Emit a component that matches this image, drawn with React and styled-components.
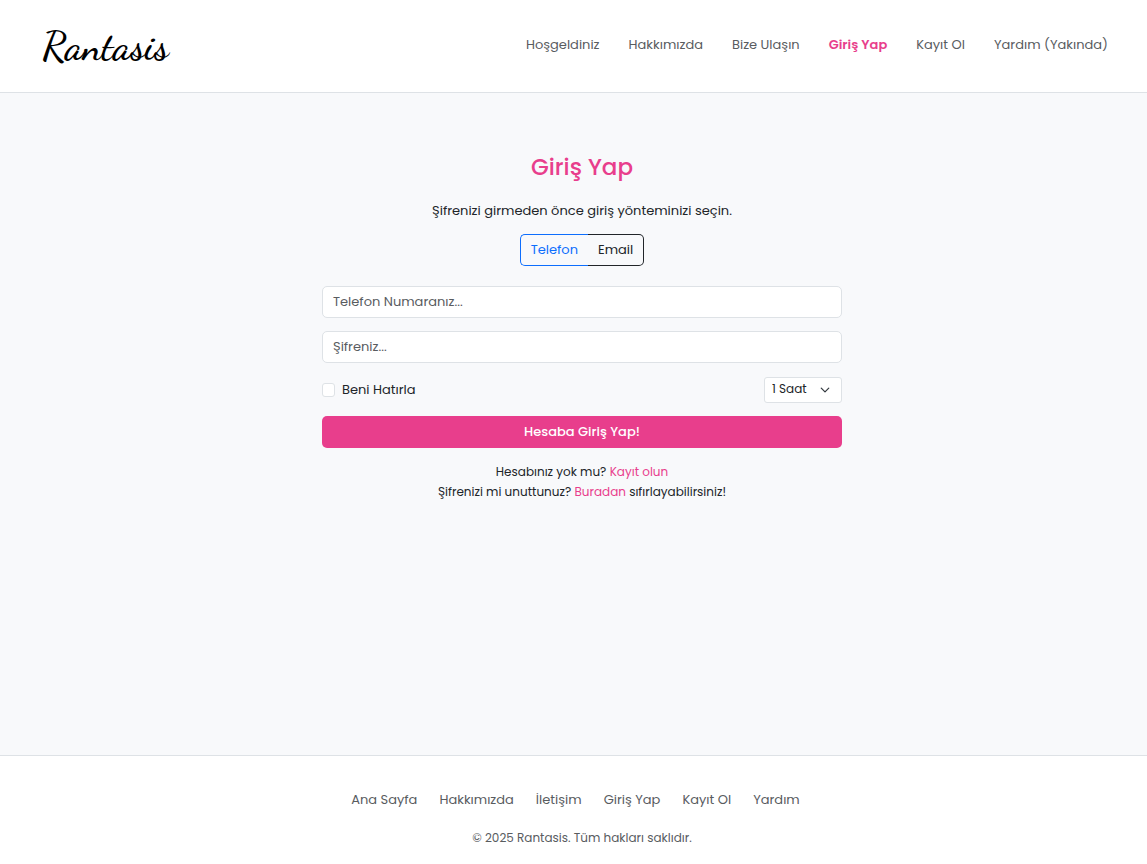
import React, { useState } from "react";
import styled, { createGlobalStyle } from "styled-components";

const GlobalStyle = createGlobalStyle`
  * {
    box-sizing: border-box;
  }
  body {
    margin: 0;
    font-family: "Poppins", "Inter", sans-serif;
    font-size: 13px;
    line-height: 20px;
    color: #212529;
    background-color: #f8f9fb;
  }
  button,
  input,
  select {
    font: inherit;
  }
`;

const Page = styled.div`
  min-height: 100vh;
  display: flex;
  flex-direction: column;
`;

const Header = styled.header`
  display: flex;
  justify-content: space-between;
  align-items: center;
  padding: 20px 39px 20px 42px;
  background-color: #ffffff;
  border-bottom: 1px solid #dee2e6;
`;

const Brand = styled.a`
  font-family: "Dancing Script", "Lato", cursive;
  font-weight: 600;
  font-size: 40px;
  line-height: 52px;
  color: #000000;
  text-decoration: none;
`;

const Nav = styled.nav`
  display: flex;
  flex-wrap: wrap;
  gap: 29px;
  padding-bottom: 2px;
`;

const NavLink = styled.a`
  font-weight: ${(props) => (props.$active ? 600 : 400)};
  color: ${(props) => (props.$active ? "#e83e8c" : "#595c5f")};
  text-decoration: none;
`;

const Main = styled.main`
  flex: 1;
  display: flex;
  flex-direction: column;
  align-items: center;
  padding: 60px 0 60px 17px;
`;

const Title = styled.h1`
  margin: 0 0 20px;
  font-weight: 500;
  font-size: 23px;
  line-height: 28px;
  color: #e83e8c;
`;

const Lead = styled.p`
  margin: 0 0 13px;
`;

const Group = styled.div`
  display: flex;
  margin-bottom: 20px;
`;

const MethodButton = styled.button`
  height: 32px;
  padding: 0 10px;
  background-color: transparent;
  border: 1px solid ${(props) => props.$tone};
  color: ${(props) => props.$tone};
  cursor: pointer;

  &:first-child {
    border-right: 0;
    border-radius: 5px 0 0 5px;
  }
  &:last-child {
    border-left: 0;
    border-radius: 0 5px 5px 0;
  }
`;

const Form = styled.form`
  width: 100%;
  max-width: 520px;
  display: flex;
  flex-direction: column;
  gap: 13px;
`;

const Field = styled.input`
  width: 100%;
  height: 32px;
  padding: 0 10px;
  color: #212529;
  background-color: #ffffff;
  border: 1px solid #dee2e6;
  border-radius: 5px;

  &::placeholder {
    color: #595c5f;
    opacity: 1;
  }
`;

const Row = styled.div`
  display: flex;
  justify-content: space-between;
  align-items: center;
  padding-top: 1px;
`;

const Remember = styled.label`
  display: flex;
  align-items: center;
  gap: 7px;
`;

const Check = styled.input`
  appearance: none;
  width: 13px;
  height: 14px;
  margin: 0;
  background-color: #ffffff;
  border: 1px solid #dee2e6;
  border-radius: 3px;

  &:checked {
    background-color: #e83e8c;
    border-color: #e83e8c;
  }
`;

const SelectBox = styled.div`
  display: grid;
  align-items: center;

  select,
  svg {
    grid-area: 1 / 1;
  }
  svg {
    justify-self: end;
    margin-right: 12px;
    pointer-events: none;
  }
`;

const Select = styled.select`
  appearance: none;
  width: 78px;
  height: 26px;
  padding: 0 24px 2px 7px;
  font-size: 12px;
  color: #212529;
  background-color: #ffffff;
  border: 1px solid #dee2e6;
  border-radius: 3px;
`;

const Submit = styled.button`
  height: 32px;
  font-weight: 500;
  color: #ffffff;
  background-color: #e83e8c;
  border: 0;
  border-radius: 5px;
  cursor: pointer;
`;

const Hints = styled.div`
  margin-top: 14px;
  text-align: center;
  font-size: 12px;

  p {
    margin: 0;
  }
  a {
    color: #e83e8c;
    text-decoration: none;
  }
`;

const Footer = styled.footer`
  display: flex;
  flex-direction: column;
  align-items: center;
  gap: 19px;
  padding: 34px 0 17px 17px;
  background-color: #ffffff;
  border-top: 1px solid #dee2e6;
  color: #595c5f;
`;

const FooterNav = styled.nav`
  display: flex;
  flex-wrap: wrap;
  gap: 22px;
  padding-right: 13px;
`;

const Copyright = styled.p`
  margin: 0;
  font-size: 12px;
  line-height: 18px;
`;

const navItems = [
  "Hoşgeldiniz",
  "Hakkımızda",
  "Bize Ulaşın",
  "Giriş Yap",
  "Kayıt Ol",
  "Yardım (Yakında)",
];

const footerItems = [
  "Ana Sayfa",
  "Hakkımızda",
  "İletişim",
  "Giriş Yap",
  "Kayıt Ol",
  "Yardım",
];

function App() {
  const [method, setMethod] = useState("phone");

  const handleSubmit = (event) => {
    event.preventDefault();
  };

  return (
    <Page lang="tr">
      <GlobalStyle />
      <Header>
        <Brand href="#">Rantasis</Brand>
        <Nav>
          {navItems.map((item) => (
            <NavLink href="#" key={item} $active={item === "Giriş Yap"}>
              {item}
            </NavLink>
          ))}
        </Nav>
      </Header>

      <Main>
        <Title>Giriş Yap</Title>
        <Lead>Şifrenizi girmeden önce giriş yönteminizi seçin.</Lead>

        <Group>
          <MethodButton
            type="button"
            $tone={method === "phone" ? "#0d6efd" : "#212529"}
            onClick={() => setMethod("phone")}
          >
            Telefon
          </MethodButton>
          <MethodButton
            type="button"
            $tone={method === "email" ? "#0d6efd" : "#212529"}
            onClick={() => setMethod("email")}
          >
            Email
          </MethodButton>
        </Group>

        <Form onSubmit={handleSubmit}>
          {method === "phone" ? (
            <Field
              type="tel"
              placeholder="Telefon Numaranız..."
              aria-label="Telefon Numaranız"
            />
          ) : (
            <Field
              type="email"
              placeholder="Email Adresiniz..."
              aria-label="Email Adresiniz"
            />
          )}
          <Field
            type="password"
            placeholder="Şifreniz..."
            aria-label="Şifreniz"
          />
          <Row>
            <Remember htmlFor="remember">
              <Check type="checkbox" id="remember" />
              Beni Hatırla
            </Remember>
            <SelectBox>
              <Select aria-label="Oturum süresi" defaultValue="1">
                <option value="1">1 Saat</option>
              </Select>
              <svg width="10" height="10" viewBox="0 0 16 16" fill="none">
                <path
                  d="m2 5 6 6 6-6"
                  stroke="#343a40"
                  strokeWidth="2"
                  strokeLinecap="round"
                  strokeLinejoin="round"
                />
              </svg>
            </SelectBox>
          </Row>
          <Submit type="submit">Hesaba Giriş Yap!</Submit>
        </Form>

        <Hints>
          <p>
            Hesabınız yok mu? <a href="#">Kayıt olun</a>
          </p>
          <p>
            Şifrenizi mi unuttunuz? <a href="#">Buradan</a> sıfırlayabilirsiniz!
          </p>
        </Hints>
      </Main>

      <Footer>
        <FooterNav>
          {footerItems.map((item) => (
            <NavLink href="#" key={item}>
              {item}
            </NavLink>
          ))}
        </FooterNav>
        <Copyright>© 2025 Rantasis. Tüm hakları saklıdır.</Copyright>
      </Footer>
    </Page>
  );
}

export default App;
